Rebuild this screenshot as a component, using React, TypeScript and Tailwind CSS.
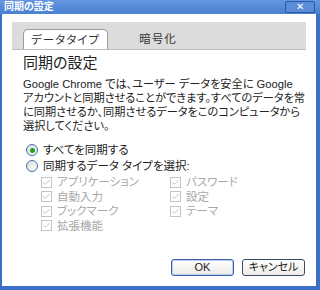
import { Check } from 'lucide-react'

const font = { fontFamily: '"Liberation Sans", "Noto Sans CJK JP", sans-serif' }

function Radio({ checked }: { checked?: boolean }) {
  return (
    <span className="flex h-[12px] w-[12px] items-center justify-center rounded-full border border-[#3d6fb2] bg-gradient-to-br from-[#dcdcd6] to-white">
      {checked && <span className="h-[5px] w-[5px] rounded-full bg-[#21a121]" />}
    </span>
  )
}

function Box({ label }: { label: string }) {
  return (
    <div className="flex h-[14.5px] items-center gap-[5px] text-[#a8a8a8]">
      <span className="flex h-[11px] w-[11px] items-center justify-center border border-[#c6c4bc] bg-white">
        <Check size={9} strokeWidth={2.2} className="text-[#b8b6ae]" />
      </span>
      <span>{label}</span>
    </div>
  )
}

export default function App() {
  return (
    <div
      className="flex h-[290px] w-[320px] flex-col overflow-hidden bg-[#3a6fc6] text-[11.5px] leading-[14px] text-[#222] [font-feature-settings:'palt']"
      style={font}
    >
      {/* Title bar */}
      <div className="flex h-[14px] shrink-0 items-start justify-between bg-gradient-to-b from-[#6598e0] to-[#4a7fd2] pl-[4px] pr-[5px]">
        <span className="pt-[1px] text-[10px] leading-[12px] font-bold text-white">同期の設定</span>
        <span className="mt-[1px] flex h-[12px] w-[30px] items-center justify-center rounded-[2px] border border-[#2c5aa6] bg-[#5a8cd8] text-[10px] leading-none text-white">
          ✕
        </span>
      </div>

      {/* Body */}
      <div className="mx-[2px] mb-[4px] mr-[4px] flex flex-1 flex-col bg-white px-[10px] pt-[8px]">
        {/* Tabs */}
        <div className="flex h-[28px] items-end border-b border-[#bdbdbd] bg-[#dcdcdc] pl-[11px]">
          <div className="flex h-[20px] w-[85px] items-center justify-center rounded-t-[5px] border border-b-0 border-[#9a9a9a] bg-white text-[11.5px] tracking-[1px] text-[#333]">
            データタイプ
          </div>
          <div className="flex h-[20px] w-[100px] items-center justify-center text-[11.5px] tracking-[1px] text-[#333]">
            暗号化
          </div>
        </div>

        <div className="pl-[11px]">
          <h1 className="mt-[3px] text-[15px] leading-[20px] text-[#222]">同期の設定</h1>
          <p className="mt-[4px] whitespace-nowrap text-[11.2px]">
            Google Chrome では、ユーザー データを安全に Google
            <br />
            アカウントと同期させることができます。すべてのデータを常
            <br />
            に同期させるか、同期させるデータをこのコンピュータから
            <br />
            選択してください。
          </p>

          <div className="mt-[9px] flex flex-col pl-[3px]">
            <label className="flex h-[16px] items-center gap-[5px]">
              <Radio checked />
              <span>すべてを同期する</span>
            </label>
            <label className="flex h-[16px] items-center gap-[5px]">
              <Radio />
              <span>同期するデータ タイプを選択:</span>
            </label>
          </div>

          <div className="mt-[1px] grid w-[260px] grid-cols-[129px_1fr] pl-[18px]">
            <Box label="アプリケーション" />
            <Box label="パスワード" />
            <Box label="自動入力" />
            <Box label="設定" />
            <Box label="ブックマーク" />
            <Box label="テーマ" />
            <Box label="拡張機能" />
          </div>
        </div>

        <div className="mt-auto mb-[10px] flex justify-end gap-[8px] pr-[1px]">
          <button className="h-[17px] w-[63px] rounded-[3px] border border-[#3c5fa8] bg-gradient-to-b from-white to-[#ecebe6] text-[11px] leading-none text-[#222] shadow-[inset_0_0_0_1px_#b8d0f0]">
            OK
          </button>
          <button className="h-[17px] w-[63px] rounded-[3px] border border-[#3c4a6a] bg-gradient-to-b from-white to-[#ecebe6] text-[11px] leading-none text-[#222]">
            キャンセル
          </button>
        </div>
      </div>
    </div>
  )
}
